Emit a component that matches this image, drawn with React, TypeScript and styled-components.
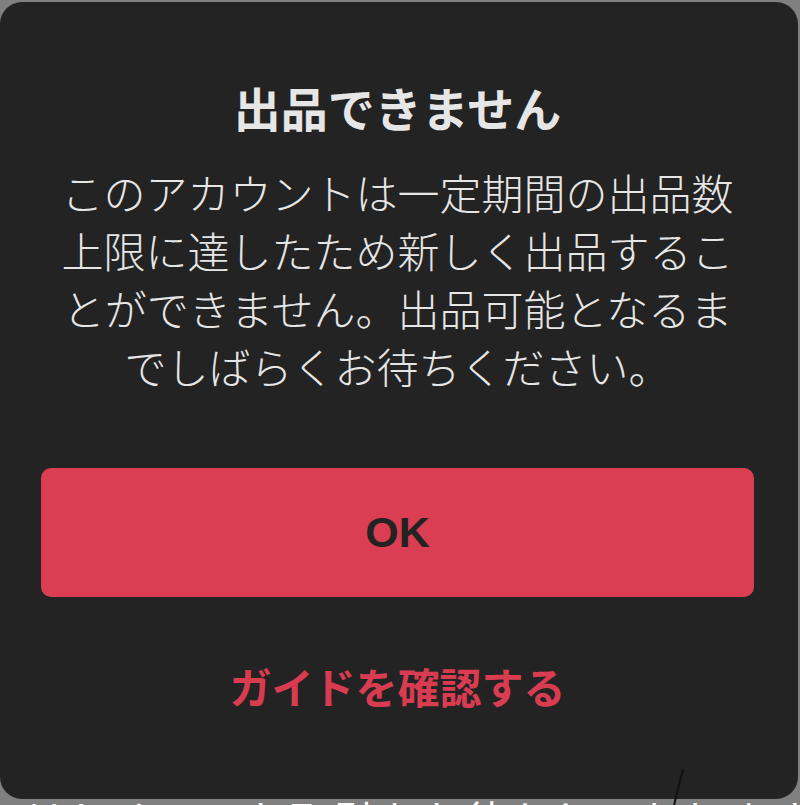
import React from "react";
import styled, { createGlobalStyle } from "styled-components";

const GlobalStyle = createGlobalStyle`
  html, body {
    margin: 0;
    padding: 0;
    background: #808080;
  }
  body {
    font-family: "Noto Sans CJK JP", "Noto Sans", sans-serif;
  }
`;

const Page = styled.div`
  position: relative;
  width: 800px;
  height: 805px;
  overflow: hidden;
  padding-top: 2px;
  box-sizing: border-box;
`;

const Dialog = styled.div`
  position: relative;
  z-index: 1;
  width: 798px;
  height: 797px;
  box-sizing: border-box;
  background: #232323;
  border-radius: 22px;
  padding: 77px 44px 0 41px;
  display: flex;
  flex-direction: column;
  align-items: stretch;
`;

const Title = styled.h1`
  margin: 0;
  font-size: 47px;
  line-height: 56px;
  font-weight: 700;
  color: #e6e6e6;
  text-align: center;
`;

const Message = styled.p`
  margin: 28px auto 0;
  width: 680px;
  font-size: 42px;
  line-height: 58px;
  font-weight: 300;
  color: #e6e6e6;
  text-align: center;
`;

const PrimaryButton = styled.button`
  margin-top: 73px;
  height: 129px;
  border: none;
  border-radius: 10px;
  background: #db3e52;
  color: #232323;
  font-family: "Liberation Sans", Arial, sans-serif;
  font-weight: 700;
  font-size: 43px;
  cursor: pointer;
`;

const LinkButton = styled.button`
  margin-top: 61px;
  height: 56px;
  border: none;
  background: none;
  color: #d93c50;
  font-family: "Noto Sans CJK JP", sans-serif;
  font-weight: 700;
  font-size: 42px;
  line-height: 56px;
  padding: 0;
  cursor: pointer;
`;

const BehindText = styled.div`
  margin: -1px 0 0 26px;
  font-size: 40px;
  line-height: 40px;
  color: #ffffff;
  white-space: nowrap;
  letter-spacing: 4px;
`;

const Stroke = styled.svg`
  position: absolute;
  z-index: 2;
  left: 668px;
  top: 768px;
  pointer-events: none;
`;

const App = () => {
  return (
    <>
      <GlobalStyle />
      <Page>
        <Dialog>
          <Title>出品できません</Title>
          <Message>
            このアカウントは一定期間の出品数上限に達したため新しく出品することができません。出品可能となるまでしばらくお待ちください。
          </Message>
          <PrimaryButton>OK</PrimaryButton>
          <LinkButton>ガイドを確認する</LinkButton>
        </Dialog>
        <BehindText>はじめてのお取引をお待ちしております</BehindText>
        <Stroke width="24" height="40" viewBox="0 0 24 40">
          <path
            d="M15 2 C12 12, 9 24, 6 38"
            fill="none"
            stroke="#111"
            strokeWidth="2"
            strokeLinecap="round"
          />
        </Stroke>
      </Page>
    </>
  );
};

export default App;
